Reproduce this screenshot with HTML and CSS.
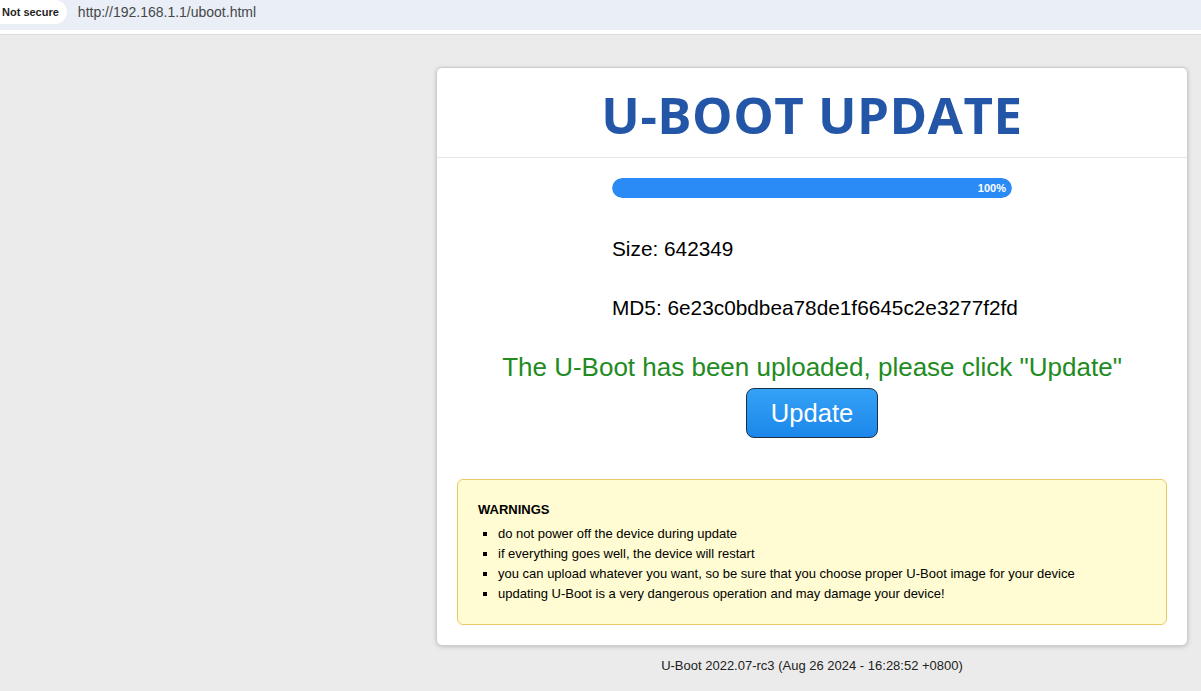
FILE: index.html
```html
<!DOCTYPE html>
<html lang="en">
<head>
<meta charset="utf-8">
<title>U-Boot Update</title>
<link rel="stylesheet" href="styles.css">
</head>
<body>
<div class="chrome">
  <div class="addr">
    <span class="chip">Not secure</span>
    <span class="url">http://192.168.1.1/uboot.html</span>
  </div>
</div>
<main class="page">
  <section class="card">
    <header class="card-head">
      <h1 class="title">U-BOOT UPDATE</h1>
    </header>
    <div class="card-body">
      <div class="progress"><div class="progress-fill" style="width:100%">100%</div></div>
      <div class="info">
        <p class="info-line">Size: 642349</p>
        <p class="info-line md5">MD5: 6e23c0bdbea78de1f6645c2e3277f2fd</p>
      </div>
      <p class="status">The U-Boot has been uploaded, please click "Update"</p>
      <div class="actions"><button class="btn">Update</button></div>
      <div class="warn">
        <div class="warn-title">WARNINGS</div>
        <ul class="warn-list">
          <li>do not power off the device during update</li>
          <li>if everything goes well, the device will restart</li>
          <li>you can upload whatever you want, so be sure that you choose proper U-Boot image for your device</li>
          <li>updating U-Boot is a very dangerous operation and may damage your device!</li>
        </ul>
      </div>
    </div>
  </section>
  <footer class="foot">U-Boot 2022.07-rc3 (Aug 26 2024 - 16:28:52 +0800)</footer>
</main>
</body>
</html>
```
FILE: styles.css
```css
* { box-sizing: border-box; }
html, body { margin: 0; padding: 0; }
body {
  background: #ebebeb;
  font-family: "Liberation Sans", Arial, sans-serif;
  color: #000;
  height: 691px;
  overflow: hidden;
}
.chrome {
  background: #fff;
  height: 35px;
  border-bottom: 1px solid #dcdcdc;
}
.addr {
  height: 30px;
  background: #e9eef7;
  display: flex;
  align-items: center;
  gap: 11px;
}
.chip {
  background: #fff;
  height: 24px;
  margin-top: -6px;
  padding: 0 8px 0 2px;
  border-radius: 0 12px 12px 0;
  display: flex;
  align-items: center;
  font-size: 11px;
  font-weight: bold;
  color: #1f1f1f;
}
.url {
  font-size: 14px;
  color: #474747;
  margin-top: -6px;
}
.page {
  padding: 32px 14px 0 436px;
}
.card {
  width: 752px;
  background: #fff;
  border: 1px solid #cdcdcd;
  border-radius: 6px;
  box-shadow: 0 1px 4px rgba(0, 0, 0, 0.18);
}
.card-head {
  border-bottom: 1px solid #e6e6e6;
  padding: 12px 0 9px;
  text-align: center;
}
.title {
  margin: 0;
  font-family: "Open Sans", sans-serif;
  font-weight: bold;
  font-size: 51px;
  letter-spacing: 0.5px;
  line-height: 68px;
  color: #2456a8;
}
.card-body {
  padding: 20px 20px 20px;
}
.progress {
  width: 400px;
  height: 20px;
  margin: 0 auto;
  border-radius: 10px;
  background: #e6e6e6;
  overflow: hidden;
}
.progress-fill {
  height: 100%;
  background: #2b8bf6;
  border-radius: 10px;
  color: #fff;
  font-size: 11px;
  font-weight: bold;
  line-height: 20px;
  text-align: right;
  padding-right: 6px;
}
.info {
  width: 400px;
  margin: 0 auto;
  padding-top: 39px;
}
.info-line {
  margin: 0;
  font-size: 20.8px;
  line-height: 24px;
  white-space: nowrap;
}
.md5 {
  margin-top: 35px;
}
.status {
  margin: 32px 0 0;
  text-align: center;
  font-size: 26px;
  line-height: 30px;
  color: #228b22;
}
.actions {
  display: flex;
  justify-content: center;
  margin-top: 6px;
}
.btn {
  font-family: "Liberation Sans", Arial, sans-serif;
  font-size: 25.6px;
  line-height: 30px;
  color: #fff;
  padding: 9px 24px;
  border: 1px solid #1b2f45;
  border-radius: 8px;
  background: linear-gradient(#35a2f7, #1c87ea);
  cursor: pointer;
}
.warn {
  margin-top: 41px;
  background: #fffbd2;
  border: 1px solid #e9c965;
  border-radius: 6px;
  padding: 20px 20px 20px;
}
.warn-title {
  font-size: 13px;
  font-weight: bold;
  line-height: 20px;
}
.warn-list {
  margin: 4px 0 0;
  padding-left: 20px;
  list-style: square;
  font-size: 13px;
  line-height: 20px;
}
.foot {
  width: 752px;
  text-align: center;
  font-size: 13px;
  line-height: 15px;
  color: #222;
  margin-top: 12px;
}
```
